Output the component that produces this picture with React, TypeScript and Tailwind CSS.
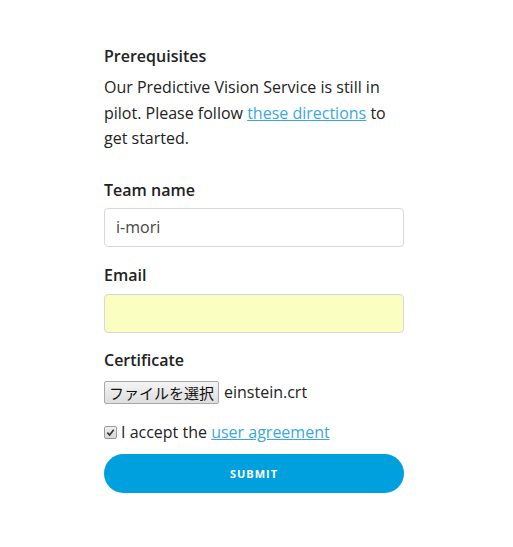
import React from "react";

export default function App() {
  return (
    <div className="w-[513px] h-[547px] bg-white" style={{ fontFamily: '"Open Sans", "Noto Sans", sans-serif' }}>
      <div className="ml-[104px] w-[300px] pt-[44px] text-[16px] leading-[25px] text-[#222]">
        <div className="font-semibold">Prerequisites</div>
        <p className="mt-[6px] leading-[25.5px]">
          Our Predictive Vision Service is still in pilot. Please follow{" "}
          <a href="#" className="text-[#3aa8de] underline">these directions</a> to get started.
        </p>

        <div className="mt-[26px] font-semibold">Team name</div>
        <div className="mt-[5px] h-[39px] rounded-[4px] border border-[#d8d8d8] bg-white flex items-center px-[11px] text-[#444]">
          i-mori
        </div>

        <div className="mt-[16px] font-semibold">Email</div>
        <div className="mt-[6px] h-[39px] rounded-[4px] border border-[#d8d8d8] bg-[#fafec0]"></div>

        <div className="mt-[15px] font-semibold">Certificate</div>
        <div className="mt-[8px] flex items-center h-[23px]">
          <div
            className="h-[23px] w-[115px] flex items-center justify-center rounded-[2px] border border-[#a8a8a8] bg-gradient-to-b from-[#f4f4f4] to-[#dedede] text-[15px] text-[#111]"
            style={{ fontFamily: '"Noto Sans CJK JP", sans-serif' }}
          >
            ファイルを選択
          </div>
          <span className="ml-[5px] text-[16px]">einstein.crt</span>
        </div>

        <div className="mt-[16px] flex items-center">
          <div className="w-[13px] h-[13px] rounded-[2px] border border-[#9a9a9a] bg-gradient-to-b from-[#f0f0f0] to-[#d6d6d6] flex items-center justify-center">
            <svg width="9" height="9" viewBox="0 0 10 10">
              <path d="M1.5 5.2 L4 7.8 L8.6 2" fill="none" stroke="#333" strokeWidth="1.8" />
            </svg>
          </div>
          <span className="ml-[4px]">
            I accept the <a href="#" className="text-[#3aa8de] underline">user agreement</a>
          </span>
        </div>

        <button className="mt-[9px] w-full h-[39px] rounded-full bg-[#00a0de] text-white text-[11px] font-bold tracking-[1px] flex items-center justify-center">
          SUBMIT
        </button>
      </div>
    </div>
  );
}
